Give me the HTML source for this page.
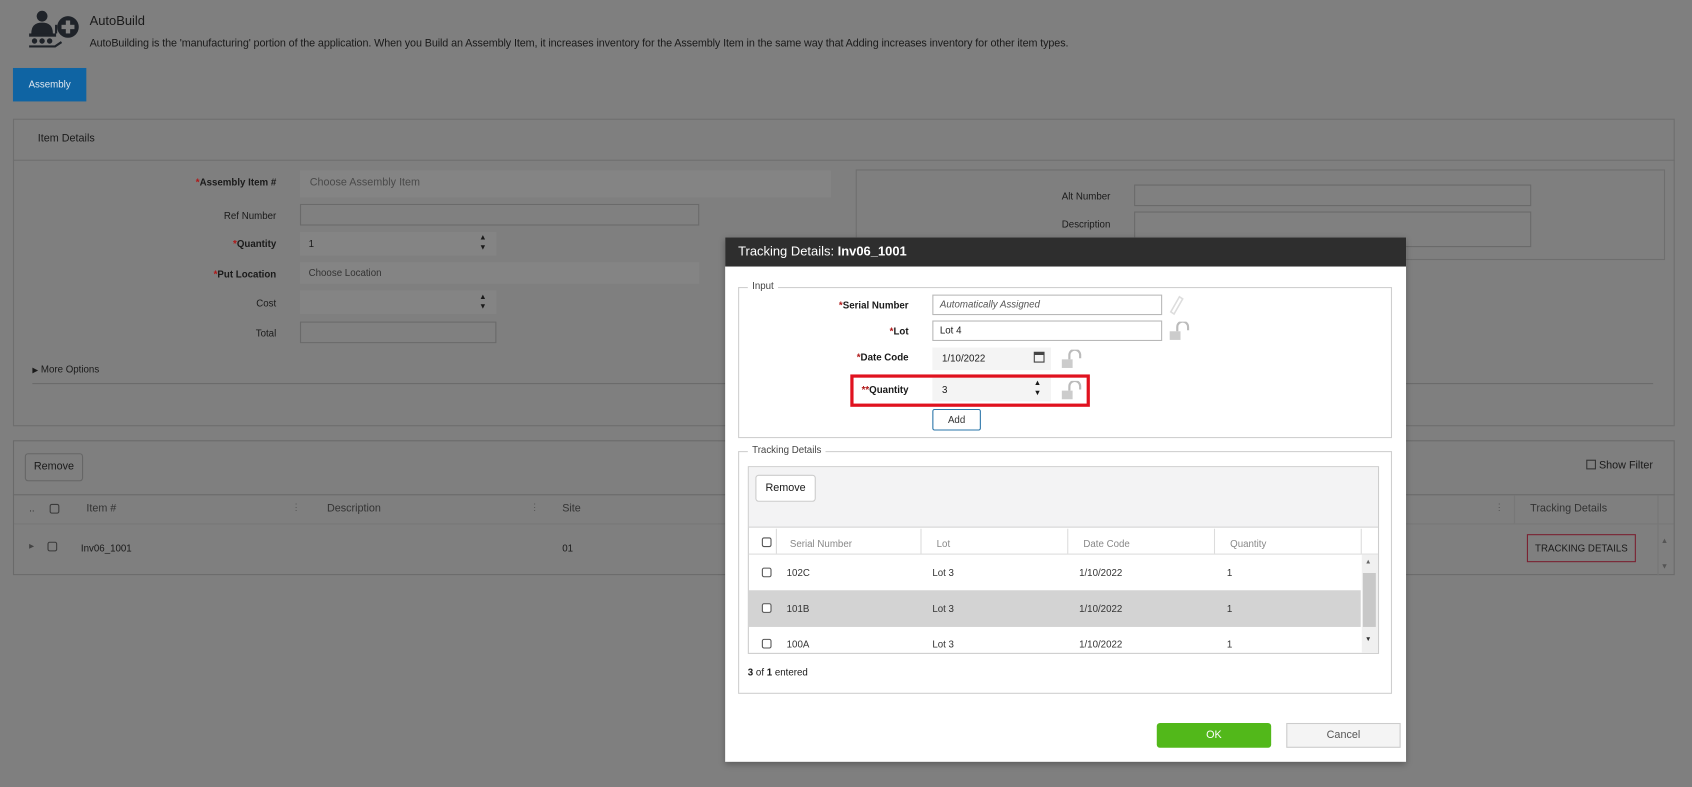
<!DOCTYPE html>
<html><head><meta charset="utf-8"><style>
*{box-sizing:border-box;margin:0;padding:0}
html,body{width:1692px;height:787px;overflow:hidden;background:#7f7f7f}
#s{position:absolute;left:0;top:0;width:1568px;height:729px;transform:scale(1.07908);transform-origin:0 0;font-family:"Liberation Sans",sans-serif;font-size:9px;color:#1a1a1a}
.a{position:absolute}
.lbl{position:absolute;text-align:right;width:200px;font-size:9px}
.b{font-weight:bold}
.r{color:#b01818}
.in{position:absolute;border:1px solid #6a6a6a;background:#808080}
.in2{position:absolute;background:#848484}
.dl{position:absolute;border:1px solid #b8b8b8;background:#fff;font-size:9px;padding:3px 6px}
.sep{position:absolute;width:1px;background:#dcdcdc}
.cb{position:absolute;width:9px;height:9px;border:1px solid #555;border-radius:2px;background:#fff}
.cbg{position:absolute;width:9px;height:9px;border:1px solid #3a3a3a;border-radius:2px}
</style></head><body><div id="s">
<svg class="a" style="left:25px;top:9px" width="50" height="36" viewBox="0 0 50 36">
<circle cx="14" cy="6" r="5" fill="#1f2329"/>
<path d="M4 22 Q4 12 14 12 Q24 12 24 22Z" fill="#1f2329"/>
<rect x="2" y="22" width="25" height="3" fill="#1f2329"/>
<rect x="26" y="14" width="2" height="8" fill="#1f2329"/>
<circle cx="7" cy="29" r="2.5" fill="#1f2329"/><circle cx="14" cy="29" r="2.5" fill="#1f2329"/><circle cx="21" cy="29" r="2.5" fill="#1f2329"/>
<path d="M2 34 H26 L32 30" stroke="#1f2329" stroke-width="2" fill="none"/>
<circle cx="38" cy="16" r="10" fill="#1f2329"/>
<rect x="36" y="10" width="4" height="12" fill="#7f7f7f"/><rect x="32" y="14" width="12" height="4" fill="#7f7f7f"/>
</svg>
<div class="a" style="left:83px;top:12px;font-size:12px">AutoBuild</div>
<div class="a" style="left:83px;top:35px;font-size:10px;letter-spacing:-0.1px">AutoBuilding is the 'manufacturing' portion of the application. When you Build an Assembly Item, it increases inventory for the Assembly Item in the same way that Adding increases inventory for other item types.</div>
<div class="a" style="left:12px;top:63px;width:68px;height:31px;background:#0f64a3;color:#e0e8f0;font-size:9px;line-height:31px;text-align:center">Assembly</div>
<div class="a" style="left:12px;top:110px;width:1540px;height:285px;border:1px solid #6e6e6e"></div>
<div class="a" style="left:12px;top:148px;width:1540px;height:1px;background:#6e6e6e"></div>
<div class="a" style="left:35px;top:123px;font-size:10px">Item Details</div>
<div class="lbl b" style="left:56px;top:164px"><span class="r">*</span>Assembly Item #</div>
<div class="lbl" style="left:56px;top:195px">Ref Number</div>
<div class="lbl b" style="left:56px;top:221px"><span class="r">*</span>Quantity</div>
<div class="lbl b" style="left:56px;top:249px"><span class="r">*</span>Put Location</div>
<div class="lbl" style="left:56px;top:276px">Cost</div>
<div class="lbl" style="left:56px;top:304px">Total</div>
<div class="in2" style="left:278px;top:158px;width:492px;height:25px;color:#4a4a4a;font-size:10px;padding:6px 9px">Choose Assembly Item</div>
<div class="in" style="left:278px;top:189px;width:370px;height:20px"></div>
<div class="in2" style="left:278px;top:215px;width:182px;height:22px;padding:6px 8px">1<span class="a" style="left:166px;top:1px;font-size:7px;line-height:9px">▲<br>▼</span></div>
<div class="in2" style="left:278px;top:243px;width:370px;height:20px;padding:5px 8px;color:#333">Choose Location</div>
<div class="in2" style="left:278px;top:269px;width:182px;height:22px"><span class="a" style="left:166px;top:2px;font-size:7px;line-height:9px">▲<br>▼</span></div>
<div class="in" style="left:278px;top:298px;width:182px;height:20px"></div>
<div class="a" style="left:793px;top:157px;width:750px;height:84px;border:1px solid #6e6e6e"></div>
<div class="lbl" style="left:829px;top:177px">Alt Number</div>
<div class="lbl" style="left:829px;top:203px">Description</div>
<div class="in" style="left:1051px;top:171px;width:368px;height:20px"></div>
<div class="in" style="left:1051px;top:196px;width:368px;height:33px"></div>
<div class="a" style="left:30px;top:337px;font-size:9px"><span style="font-size:7px">▶</span> More Options</div>
<div class="a" style="left:30px;top:355px;width:1502px;height:1px;background:#6a6a6a"></div>
<div class="a" style="left:12px;top:408px;width:1540px;height:125px;border:1px solid #6a6a6a"></div>
<div class="a" style="left:12px;top:458px;width:1540px;height:1px;background:#6a6a6a"></div>
<div class="a" style="left:13px;top:485px;width:1538px;height:1px;background:#777"></div>
<div class="a" style="left:23px;top:420px;width:54px;height:26px;border:1px solid #666;border-radius:3px;font-size:10px;line-height:24px;text-align:center">Remove</div>
<div class="a" style="left:1470px;top:426px;font-size:10px"><span style="display:inline-block;width:9px;height:9px;border:1px solid #333;vertical-align:-1px"></span> Show Filter</div>
<div class="a" style="left:27px;top:466px;font-size:9px;color:#333">..</div>
<div class="cbg" style="left:46px;top:467px"></div>
<div class="a" style="left:80px;top:466px;font-size:10px;color:#333">Item #</div>
<div class="a" style="left:270px;top:465px;color:#555">⋮</div>
<div class="a" style="left:303px;top:466px;font-size:10px;color:#333">Description</div>
<div class="a" style="left:491px;top:465px;color:#555">⋮</div>
<div class="a" style="left:521px;top:466px;font-size:10px;color:#333">Site</div>
<div class="a" style="left:1385px;top:465px;color:#555">⋮</div>
<div class="a" style="left:1418px;top:466px;font-size:10px;color:#333">Tracking Details</div>
<div class="a" style="left:1403px;top:459px;width:1px;height:26px;background:#777"></div>
<div class="a" style="left:1536px;top:459px;width:1px;height:74px;background:#777"></div>
<div class="a" style="left:27px;top:503px;font-size:6px;color:#444">▶</div>
<div class="cbg" style="left:44px;top:502px"></div>
<div class="a" style="left:75px;top:503px;font-size:9px">Inv06_1001</div>
<div class="a" style="left:521px;top:503px;font-size:9px">01</div>
<div class="a" style="left:1415px;top:495px;width:101px;height:26px;border:1px solid #7a2030;font-size:9px;line-height:24px;text-align:center">TRACKING DETAILS</div>
<div class="a" style="left:1539px;top:490px;font-size:7px;color:#555;line-height:24px">▲<br>▼</div>
<div class="a" style="left:672px;top:220px;width:631px;height:486px;background:#fff;box-shadow:0 2px 6px rgba(0,0,0,.3)">
<div class="a" style="left:0;top:0;width:631px;height:27px;background:#2e2e2e;color:#fff;font-size:12px;line-height:27px;padding-left:12px">Tracking Details: <b>Inv06_1001</b></div>
<div class="a" style="left:12px;top:46px;width:606px;height:140px;border:1px solid #cfcfcf"></div>
<div class="a" style="left:21px;top:40px;background:#fff;padding:0 4px;font-size:9px;color:#444">Input</div>
<div class="lbl b" style="left:-30px;top:58px"><span class="r">*</span>Serial Number</div>
<div class="lbl b" style="left:-30px;top:82px"><span class="r">*</span>Lot</div>
<div class="lbl b" style="left:-30px;top:106px"><span class="r">*</span>Date Code</div>
<div class="lbl b" style="left:-30px;top:136px"><span class="r">**</span>Quantity</div>
<div class="dl" style="left:192px;top:53px;width:213px;height:19px;font-style:italic;color:#555">Automatically Assigned</div>
<div class="dl" style="left:192px;top:77px;width:213px;height:19px">Lot 4</div>
<div class="a" style="left:192px;top:102px;width:110px;height:21px;background:#f4f4f4;font-size:9px;padding:5px 9px">1/10/2022<span class="a" style="left:94px;top:4px;width:10px;height:10px;border:1px solid #444;border-top-width:3px"></span></div>
<div class="a" style="left:192px;top:130px;width:110px;height:22px;background:#f4f4f4;font-size:9px;padding:6px 9px">3<span class="a" style="left:94px;top:1px;font-size:7px;line-height:9px">▲<br>▼</span></div>
<div class="a" style="left:116px;top:127px;width:222px;height:30px;border:3px solid #e0121f"></div>
<svg class="a" style="left:410px;top:53px" width="16" height="20"><path d="M11 2 L14 4 L6 18 L3 16 Z" stroke="#ddd" stroke-width="1.5" fill="none"/></svg>
<svg class="a" style="left:410px;top:78px" width="22" height="18"><path d="M9 9 V5 A5 5 0 0 1 19 5 V8" stroke="#bbb" stroke-width="2" fill="none"/><rect x="2" y="9" width="10" height="8" fill="#ccc"/></svg>
<svg class="a" style="left:310px;top:104px" width="22" height="18"><path d="M9 9 V5 A5 5 0 0 1 19 5 V8" stroke="#bbb" stroke-width="2" fill="none"/><rect x="2" y="9" width="10" height="8" fill="#ccc"/></svg>
<svg class="a" style="left:310px;top:133px" width="22" height="18"><path d="M9 9 V5 A5 5 0 0 1 19 5 V8" stroke="#bbb" stroke-width="2" fill="none"/><rect x="2" y="9" width="10" height="8" fill="#ccc"/></svg>
<div class="a" style="left:192px;top:159px;width:45px;height:20px;border:1px solid #2a74a8;border-radius:2px;font-size:9px;line-height:18px;text-align:center;color:#333">Add</div>
<div class="a" style="left:12px;top:198px;width:606px;height:225px;border:1px solid #cfcfcf"></div>
<div class="a" style="left:21px;top:192px;background:#fff;padding:0 4px;font-size:9px;color:#444">Tracking Details</div>
<div class="a" style="left:21px;top:212px;width:585px;height:174px;border:1px solid #cdcdcd"></div>
<div class="a" style="left:22px;top:213px;width:583px;height:56px;background:#f3f3f4;border-bottom:1px solid #d5d5d5"></div>
<div class="a" style="left:28px;top:220px;width:56px;height:25px;border:1px solid #ccc;border-radius:3px;background:#fff;font-size:10px;line-height:23px;text-align:center">Remove</div>
<div class="a" style="left:22px;top:293px;width:583px;height:1px;background:#ddd"></div>
<div class="cb" style="left:34px;top:278px"></div>
<div class="sep" style="left:47px;top:270px;height:23px"></div>
<div class="a" style="left:60px;top:279px;font-size:9px;color:#888">Serial Number</div>
<div class="sep" style="left:181px;top:270px;height:23px"></div>
<div class="a" style="left:196px;top:279px;font-size:9px;color:#888">Lot</div>
<div class="sep" style="left:317px;top:270px;height:23px"></div>
<div class="a" style="left:332px;top:279px;font-size:9px;color:#888">Date Code</div>
<div class="sep" style="left:453px;top:270px;height:23px"></div>
<div class="a" style="left:468px;top:279px;font-size:9px;color:#888">Quantity</div>
<div class="sep" style="left:589px;top:270px;height:23px"></div>
<div class="a" style="left:22px;top:327px;width:567px;height:34px;background:#d3d3d3"></div>
<div class="cb" style="left:34px;top:306px"></div><div class="a" style="left:57px;top:306px;color:#333">102C</div><div class="a" style="left:192px;top:306px;color:#333">Lot 3</div><div class="a" style="left:328px;top:306px;color:#333">1/10/2022</div><div class="a" style="left:465px;top:306px;color:#333">1</div>
<div class="cb" style="left:34px;top:339px"></div><div class="a" style="left:57px;top:339px;color:#333">101B</div><div class="a" style="left:192px;top:339px;color:#333">Lot 3</div><div class="a" style="left:328px;top:339px;color:#333">1/10/2022</div><div class="a" style="left:465px;top:339px;color:#333">1</div>
<div class="cb" style="left:34px;top:372px"></div><div class="a" style="left:57px;top:372px;color:#333">100A</div><div class="a" style="left:192px;top:372px;color:#333">Lot 3</div><div class="a" style="left:328px;top:372px;color:#333">1/10/2022</div><div class="a" style="left:465px;top:372px;color:#333">1</div>
<div class="a" style="left:590px;top:294px;width:15px;height:91px;background:#f0f0f0"></div>
<div class="a" style="left:591px;top:311px;width:12px;height:50px;background:#c8c8c8"></div>
<div class="a" style="left:593px;top:298px;font-size:6px;color:#666">▲</div>
<div class="a" style="left:593px;top:370px;font-size:6px;color:#333">▼</div>
<div class="a" style="left:21px;top:398px;font-size:9px"><b>3</b> of <b>1</b> entered</div>
<div class="a" style="left:400px;top:450px;width:106px;height:23px;background:#52b81a;border-radius:3px;color:#fff;font-size:10px;line-height:23px;text-align:center">OK</div>
<div class="a" style="left:520px;top:450px;width:106px;height:23px;background:#f4f4f4;border:1px solid #ccc;color:#555;font-size:10px;line-height:21px;text-align:center">Cancel</div>
</div>
</div></body></html>
